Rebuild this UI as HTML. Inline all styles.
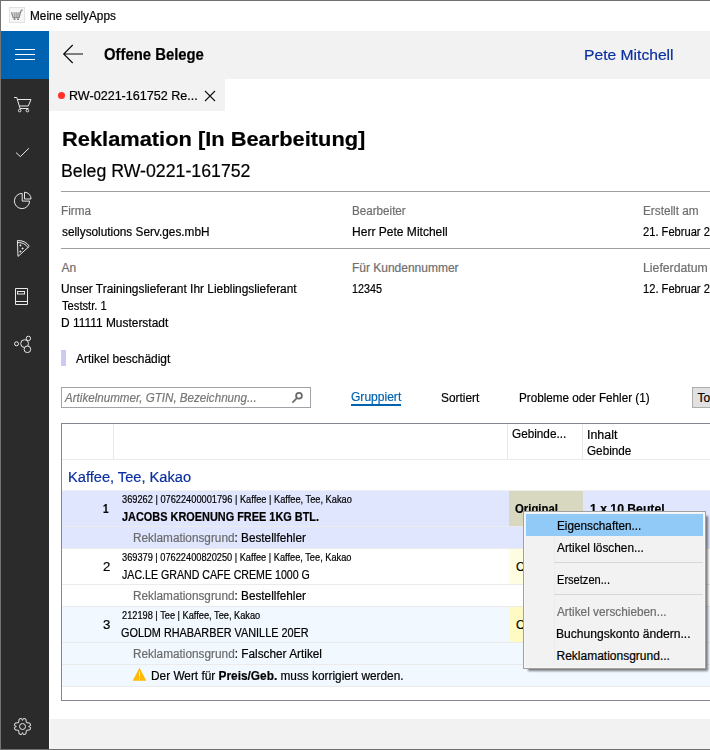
<!DOCTYPE html>
<html><head><meta charset="utf-8">
<style>
html,body{margin:0;padding:0;width:710px;height:750px;overflow:hidden;background:#fff;}
body{position:relative;font-family:"Liberation Sans",sans-serif;}
.r{position:absolute;}
.t{-webkit-text-stroke:0.2px currentColor;position:absolute;white-space:nowrap;transform-origin:0 0;font-family:"Liberation Sans",sans-serif;}
svg{position:absolute;overflow:visible;}
</style></head><body>
<!-- window border -->
<div class="r" style="left:0;top:0;width:710px;height:1px;background:#6f6f6f"></div>
<div class="r" style="left:0;top:0;width:1px;height:750px;background:#747474"></div>
<div class="r" style="left:0;top:749px;width:710px;height:1px;background:#6f6f6f"></div>
<!-- title icon -->
<div class="r" style="left:9px;top:7px;width:14px;height:14px;border:1px solid #e2e2e2;background:#f6f6f6"></div>
<svg style="left:0;top:0" width="30" height="30" viewBox="0 0 30 30">
<path d="M11.5 12.2 L13.2 17.5 L19 17.5 L20.8 11.2 Q21.3 9.8 22.7 9.8" fill="none" stroke="#8a8a8a" stroke-width="1.3"/>
<path d="M13 13 L20 13 M13.6 15 L19.5 15 M14.2 12.5 L14.8 17 M16.3 12.5 L16.3 17 M18.3 12.5 L17.8 17" stroke="#9a9a9a" stroke-width="0.9" fill="none"/>
<path d="M13.5 19.5 L15.5 19.5 M17 19.5 L19 19.5 M14.5 17.5 L14.5 19.5 M18 17.5 L18 19.5" stroke="#8a8a8a" stroke-width="1.1"/>
</svg>
<!-- sidebar -->
<div class="r" style="left:1px;top:31px;width:48px;height:718px;background:#2b2b2b"></div>
<div class="r" style="left:1px;top:31px;width:48px;height:48px;background:#0063b1"></div>
<div class="r" style="left:15px;top:49px;width:20px;height:1px;background:#fff"></div>
<div class="r" style="left:15px;top:54px;width:20px;height:1px;background:#fff"></div>
<div class="r" style="left:15px;top:59px;width:20px;height:1px;background:#fff"></div>
<svg style="left:0;top:0" width="49" height="750" viewBox="0 0 49 750" fill="none" stroke="#e8e8e8" stroke-width="1">
 <!-- cart -->
 <path d="M14 97.5 L16.8 97.5 L20 108.5 L28.5 108.5"/>
 <path d="M17.2 99.5 L31 99.5 L28.3 106 L19.6 106"/>
 <circle cx="19.7" cy="110.6" r="1.3"/>
 <circle cx="27.4" cy="110.6" r="1.3"/>
 <!-- check -->
 <path d="M16 152.6 L20.4 156.6 L28.9 148.2"/>
 <!-- pie -->
 <path d="M22.2 193.4 A7.6 7.6 0 1 0 29.6 201.1 L22.2 201.1 Z"/>
 <path d="M24.5 192.2 L24.5 199 L31 199 A6.6 6.6 0 0 0 24.5 192.2 Z"/>
 <!-- pizza -->
 <path d="M17.4 240.6 L18 256.4 L29 246.6"/>
 <path d="M17.4 240.6 Q25 240 29.4 246.4"/>
 <path d="M18 242.6 Q24.5 242.3 28 247.6"/>
 <circle cx="20.4" cy="245.3" r="0.6" fill="#e8e8e8"/>
 <circle cx="22.6" cy="248.5" r="0.6" fill="#e8e8e8"/>
 <circle cx="20.4" cy="251.5" r="0.6" fill="#e8e8e8"/>
 <!-- book -->
 <path d="M15.5 288.5 L27.5 288.5 L27.5 304.5 L15.5 304.5 Z M15.5 301.5 L27.5 301.5"/>
 <rect x="17.5" y="291.5" width="7" height="2.5"/>
 <!-- share -->
 <circle cx="16.5" cy="343.8" r="2"/>
 <circle cx="24.6" cy="343.6" r="3.9"/>
 <circle cx="28.4" cy="338.4" r="2.2" fill="#2b2b2b"/>
 <circle cx="27.4" cy="349.3" r="3.3" fill="#2b2b2b"/>
 <!-- gear -->
 <path d="M22.50 720.40 L23.50 718.36 L25.84 719.01 L26.39 722.61 L29.99 723.16 L30.64 725.50 L28.60 726.50 L30.64 727.50 L29.99 729.84 L26.39 730.39 L25.84 733.99 L23.50 734.64 L22.50 732.60 L21.50 734.64 L19.16 733.99 L18.61 730.39 L15.01 729.84 L14.36 727.50 L16.40 726.50 L14.36 725.50 L15.01 723.16 L18.61 722.61 L19.16 719.01 L21.50 718.36 Z" stroke-linejoin="miter"/>
 <circle cx="22.5" cy="726.5" r="3"/>
</svg>
<!-- header -->
<div class="r" style="left:49px;top:31px;width:661px;height:48px;background:#f2f2f2"></div>
<svg style="left:0;top:0" width="100" height="80" viewBox="0 0 100 80" fill="none" stroke="#0a0a0a" stroke-width="1.15">
 <path d="M63.5 54 L83 54 M72.7 45 L63.7 54 L72.7 63"/>
</svg>
<!-- tab -->
<div class="r" style="left:49px;top:79px;width:176px;height:32px;background:#f2f2f2"></div>
<div class="r" style="left:58px;top:92px;width:7px;height:7px;border-radius:50%;background:#ff3028"></div>
<svg style="left:0;top:0" width="230" height="120" viewBox="0 0 230 120" fill="none" stroke="#111" stroke-width="1.1">
 <path d="M205 91 L215 101 M215 91 L205 101"/>
</svg>
<!-- separators -->
<div class="r" style="left:61px;top:191px;width:649px;height:1px;background:#a0a0a0"></div>
<div class="r" style="left:61px;top:248px;width:649px;height:1px;background:#a0a0a0"></div>
<div class="r" style="left:61px;top:350px;width:5px;height:16px;background:#cacaf2"></div>
<!-- search -->
<div class="r" style="left:61px;top:387px;width:248px;height:19px;border:1px solid #a2a3a8;background:#fff"></div>
<svg style="left:0;top:0" width="320" height="420" viewBox="0 0 320 420" fill="none" stroke="#6a6a6a">
 <circle cx="299" cy="395.8" r="2.9" stroke-width="1.8"/>
 <path d="M296.6 398.4 L292.4 402.6" stroke-width="1.7"/>
</svg>
<div class="r" style="left:351px;top:404px;width:50px;height:2px;background:#0063b1"></div>
<div class="r" style="left:692px;top:387px;width:30px;height:19px;border:1px solid #adadad;background:#e1e1e1"></div>
<!-- table -->
<div class="r" style="left:61px;top:423px;width:660px;height:276px;border:1px solid #828790;border-right:none;"></div>
<div class="r" style="left:62px;top:459px;width:648px;height:1px;background:#ebebeb"></div>
<div class="r" style="left:113px;top:424px;width:1px;height:35px;background:#e8e8e8"></div>
<div class="r" style="left:507px;top:424px;width:1px;height:35px;background:#e8e8e8"></div>
<div class="r" style="left:582px;top:424px;width:1px;height:35px;background:#e8e8e8"></div>
<!-- row1 -->
<div class="r" style="left:62px;top:491px;width:648px;height:57px;background:#e0e6fe"></div>
<div class="r" style="left:62px;top:490px;width:648px;height:1px;background:#f0f0f0"></div>
<div class="r" style="left:509px;top:491px;width:74px;height:35px;background:#d8d8c0"></div>
<div class="r" style="left:62px;top:526px;width:648px;height:1px;background:#ebebeb"></div>
<div class="r" style="left:62px;top:548px;width:648px;height:1px;background:#ebebeb"></div>
<!-- row2 -->
<div class="r" style="left:509px;top:549px;width:74px;height:35px;background:#fffde1"></div>
<div class="r" style="left:62px;top:584px;width:648px;height:1px;background:#ebebeb"></div>
<div class="r" style="left:62px;top:606px;width:648px;height:1px;background:#ebebeb"></div>
<!-- row3 -->
<div class="r" style="left:62px;top:607px;width:648px;height:79px;background:#f1f8ff"></div>
<div class="r" style="left:509px;top:607px;width:74px;height:35px;background:#fdfac4"></div>
<div class="r" style="left:62px;top:642px;width:648px;height:1px;background:#ebebeb"></div>
<div class="r" style="left:62px;top:664px;width:648px;height:1px;background:#ebebeb"></div>
<div class="r" style="left:62px;top:686px;width:648px;height:1px;background:#ebebeb"></div>
<svg style="left:0;top:0" width="160" height="700" viewBox="0 0 160 700">
 <path d="M139.5 667.8 L146.3 680.8 L132.7 680.8 Z" fill="#ffb900"/>
 <path d="M139.5 671.5 L139.5 676.5 M139.5 678 L139.5 679.3" stroke="#fff3c0" stroke-width="1"/>
</svg>
<!-- footer -->
<div class="r" style="left:50px;top:719px;width:660px;height:30px;background:#f2f2f2"></div>
<div class="t" id="a0" style="left:29.92px;top:10.01px;font-size:12px;line-height:12px;font-weight:400;color:#000;transform:scaleX(0.9826);">Meine sellyApps</div>
<div class="t" id="a1" style="left:103.57px;top:47.00px;font-size:16px;line-height:16px;font-weight:700;color:#000;transform:scaleX(0.9283);">Offene Belege</div>
<div class="t" id="a2" style="left:584.09px;top:47.00px;font-size:15.5px;line-height:15.5px;font-weight:400;color:#0a2fa0;transform:scaleX(1.0092);">Pete Mitchell</div>
<div class="t" id="a3" style="left:68.65px;top:90.01px;font-size:12px;line-height:12px;font-weight:400;color:#000;transform:scaleX(1.0471);">RW-0221-161752 Re...</div>
<div class="t" id="a4" style="left:61.96px;top:128.00px;font-size:21px;line-height:21px;font-weight:700;color:#000;transform:scaleX(1.0400);">Reklamation [In Bearbeitung]</div>
<div class="t" id="a5" style="left:61.32px;top:162.01px;font-size:18px;line-height:18px;font-weight:400;color:#000;transform:scaleX(0.9843);">Beleg RW-0221-161752</div>
<div class="t" id="a6" style="left:60.62px;top:205.01px;font-size:12px;line-height:12px;font-weight:400;color:#6e6e6e;transform:scaleX(0.9767);">Firma</div>
<div class="t" id="a7" style="left:61.60px;top:226.01px;font-size:12px;line-height:12px;font-weight:400;color:#000;transform:scaleX(0.9846);">sellysolutions Serv.ges.mbH</div>
<div class="t" id="a8" style="left:351.93px;top:205.01px;font-size:12px;line-height:12px;font-weight:400;color:#6e6e6e;transform:scaleX(0.9704);">Bearbeiter</div>
<div class="t" id="a9" style="left:351.90px;top:226.01px;font-size:12px;line-height:12px;font-weight:400;color:#000;transform:scaleX(1.0032);">Herr Pete Mitchell</div>
<div class="t" id="a10" style="left:642.62px;top:205.01px;font-size:12px;line-height:12px;font-weight:400;color:#6e6e6e;transform:scaleX(0.9818);">Erstellt am</div>
<div class="t" id="a11" style="left:642.67px;top:226.01px;font-size:12px;line-height:12px;font-weight:400;color:#000;transform:scaleX(0.9282);">21. Februar 2</div>
<div class="t" id="a12" style="left:61.60px;top:262.01px;font-size:12px;line-height:12px;font-weight:400;color:#6e6e6e;">An</div>
<div class="t" id="a13" style="left:60.61px;top:283.01px;font-size:12px;line-height:12px;font-weight:400;color:#000;transform:scaleX(0.9924);">Unser Trainingslieferant Ihr Lieblingslieferant</div>
<div class="t" id="a14" style="left:61.60px;top:300.01px;font-size:12px;line-height:12px;font-weight:400;color:#000;transform:scaleX(0.9313);">Teststr. 1</div>
<div class="t" id="a15" style="left:60.61px;top:317.01px;font-size:12px;line-height:12px;font-weight:400;color:#000;transform:scaleX(0.9944);">D 11111 Musterstadt</div>
<div class="t" id="a16" style="left:351.90px;top:262.01px;font-size:12px;line-height:12px;font-weight:400;color:#6e6e6e;">Für Kundennummer</div>
<div class="t" id="a17" style="left:352.00px;top:283.01px;font-size:12px;line-height:12px;font-weight:400;color:#000;transform:scaleX(0.8969);">12345</div>
<div class="t" id="a18" style="left:642.58px;top:262.01px;font-size:12px;line-height:12px;font-weight:400;color:#6e6e6e;transform:scaleX(1.0226);">Lieferdatum</div>
<div class="t" id="a19" style="left:642.67px;top:283.01px;font-size:12px;line-height:12px;font-weight:400;color:#000;transform:scaleX(0.9282);">12. Februar 2</div>
<div class="t" id="a20" style="left:76.10px;top:353.01px;font-size:12px;line-height:12px;font-weight:400;color:#000;transform:scaleX(0.9958);">Artikel beschädigt</div>
<div class="t" id="a21" style="left:64.60px;top:392.01px;font-size:12px;line-height:12px;font-weight:400;color:#777777;transform:scaleX(0.9675);font-style:italic;">Artikelnummer, GTIN, Bezeichnung...</div>
<div class="t" id="a22" style="left:350.80px;top:391.01px;font-size:12px;line-height:12px;font-weight:400;color:#0063b1;transform:scaleX(1.0041);">Gruppiert</div>
<div class="t" id="a23" style="left:440.61px;top:392.01px;font-size:12px;line-height:12px;font-weight:400;color:#000;transform:scaleX(0.9895);">Sortiert</div>
<div class="t" id="a24" style="left:518.73px;top:392.01px;font-size:12px;line-height:12px;font-weight:400;color:#000;transform:scaleX(0.9742);">Probleme oder Fehler (1)</div>
<div class="t" id="a25" style="left:697.60px;top:392.01px;font-size:12px;line-height:12px;font-weight:400;color:#000;">To</div>
<div class="t" id="a26" style="left:512.12px;top:428.01px;font-size:12px;line-height:12px;font-weight:400;color:#000;transform:scaleX(0.9792);">Gebinde...</div>
<div class="t" id="a27" style="left:587.06px;top:429.01px;font-size:12px;line-height:12px;font-weight:400;color:#000;transform:scaleX(1.0357);">Inhalt</div>
<div class="t" id="a28" style="left:587.12px;top:445.01px;font-size:12px;line-height:12px;font-weight:400;color:#000;transform:scaleX(0.9773);">Gebinde</div>
<div class="t" id="a29" style="left:68.26px;top:469.00px;font-size:15.5px;line-height:15.5px;font-weight:400;color:#0a2fa0;transform:scaleX(0.9434);">Kaffee, Tee, Kakao</div>
<div class="t" id="a30" style="left:102.97px;top:503.01px;font-size:12px;line-height:12px;font-weight:700;color:#000;transform:scaleX(0.8333);">1</div>
<div class="t" id="a31" style="left:121.50px;top:495.00px;font-size:10px;line-height:10px;font-weight:400;color:#000;transform:scaleX(0.9246);">369262 | 07622400001796 | Kaffee | Kaffee, Tee, Kakao</div>
<div class="t" id="a32" style="left:121.60px;top:511.01px;font-size:12px;line-height:12px;font-weight:700;color:#000;transform:scaleX(0.9093);">JACOBS KROENUNG FREE 1KG BTL.</div>
<div class="t" id="a33" style="left:132.92px;top:532.01px;font-size:12px;line-height:12px;font-weight:400;color:#000;transform:scaleX(0.9817);"><span style="color:#6b6b6b">Reklamationsgrund</span>: Bestellfehler</div>
<div class="t" id="a34" style="left:102.70px;top:561.01px;font-size:12px;line-height:12px;font-weight:400;color:#000;transform:scaleX(1.1000);">2</div>
<div class="t" id="a35" style="left:121.50px;top:553.00px;font-size:10px;line-height:10px;font-weight:400;color:#000;transform:scaleX(0.9230);">369379 | 07622400820250 | Kaffee | Kaffee, Tee, Kakao</div>
<div class="t" id="a36" style="left:121.60px;top:569.01px;font-size:12px;line-height:12px;font-weight:400;color:#000;transform:scaleX(0.8858);">JAC.LE GRAND CAFE CREME 1000 G</div>
<div class="t" id="a37" style="left:132.92px;top:590.01px;font-size:12px;line-height:12px;font-weight:400;color:#000;transform:scaleX(0.9817);"><span style="color:#6b6b6b">Reklamationsgrund</span>: Bestellfehler</div>
<div class="t" id="a38" style="left:102.70px;top:619.01px;font-size:12px;line-height:12px;font-weight:400;color:#000;transform:scaleX(1.1000);">3</div>
<div class="t" id="a39" style="left:121.50px;top:611.00px;font-size:10px;line-height:10px;font-weight:400;color:#000;transform:scaleX(0.9227);">212198 | Tee | Kaffee, Tee, Kakao</div>
<div class="t" id="a40" style="left:120.69px;top:627.01px;font-size:12px;line-height:12px;font-weight:400;color:#000;transform:scaleX(0.9058);">GOLDM RHABARBER VANILLE 20ER</div>
<div class="t" id="a41" style="left:132.92px;top:648.01px;font-size:12px;line-height:12px;font-weight:400;color:#000;transform:scaleX(0.9838);"><span style="color:#6b6b6b">Reklamationsgrund</span>: Falscher Artikel</div>
<div class="t" id="a42" style="left:151.21px;top:670.01px;font-size:12px;line-height:12px;font-weight:400;color:#000;transform:scaleX(0.9870);">Der Wert für <b>Preis/Geb.</b> muss korrigiert werden.</div>
<div class="t" id="a43" style="left:515.30px;top:503.01px;font-size:12px;line-height:12px;font-weight:700;color:#000;transform:scaleX(0.9467);">Original</div>
<div class="t" id="a44" style="left:590.08px;top:503.01px;font-size:12px;line-height:12px;font-weight:700;color:#000;transform:scaleX(1.0167);">1 x 10 Beutel</div>
<div class="t" id="a45" style="left:516.10px;top:561.01px;font-size:12px;line-height:12px;font-weight:400;color:#000;">O</div>
<div class="t" id="a46" style="left:516.10px;top:619.01px;font-size:12px;line-height:12px;font-weight:400;color:#000;">O</div>
<!-- context menu -->
<div class="r" style="left:528px;top:516px;width:180px;height:155px;background:rgba(0,0,0,0.5);filter:blur(1.1px)"></div>
<div class="r" style="left:523px;top:511px;width:183px;height:158px;box-sizing:border-box;border:1px solid #a0a0a0;background:#f2f2f2"></div>
<div class="r" style="left:524px;top:512px;width:181px;height:156px;box-sizing:border-box;border:1px solid #f9f8f7;"></div>
<div class="r" style="left:554px;top:536px;width:1px;height:131px;background:#ececec"></div>
<div class="r" style="left:526px;top:514px;width:177px;height:22px;background:#91c9f7"></div>
<div class="r" style="left:554px;top:562px;width:149px;height:1px;background:#d7d7d7"></div>
<div class="r" style="left:554px;top:594px;width:149px;height:1px;background:#d7d7d7"></div>
<div class="t" id="m0" style="left:556.52px;top:520.01px;font-size:12px;line-height:12px;font-weight:400;color:#000;transform:scaleX(0.9798);">Eigenschaften...</div>
<div class="t" id="m1" style="left:556.80px;top:542.01px;font-size:12px;line-height:12px;font-weight:400;color:#000;transform:scaleX(0.9862);">Artikel löschen...</div>
<div class="t" id="m2" style="left:556.58px;top:574.01px;font-size:12px;line-height:12px;font-weight:400;color:#000;transform:scaleX(0.9236);">Ersetzen...</div>
<div class="t" id="m3" style="left:556.80px;top:606.01px;font-size:12px;line-height:12px;font-weight:400;color:#6d6d6d;transform:scaleX(0.9827);">Artikel verschieben...</div>
<div class="t" id="m4" style="left:556.49px;top:628.01px;font-size:12px;line-height:12px;font-weight:400;color:#000;transform:scaleX(1.0084);">Buchungskonto ändern...</div>
<div class="t" id="m5" style="left:556.50px;top:650.01px;font-size:12px;line-height:12px;font-weight:400;color:#000;">Reklamationsgrund...</div>
</body></html>
